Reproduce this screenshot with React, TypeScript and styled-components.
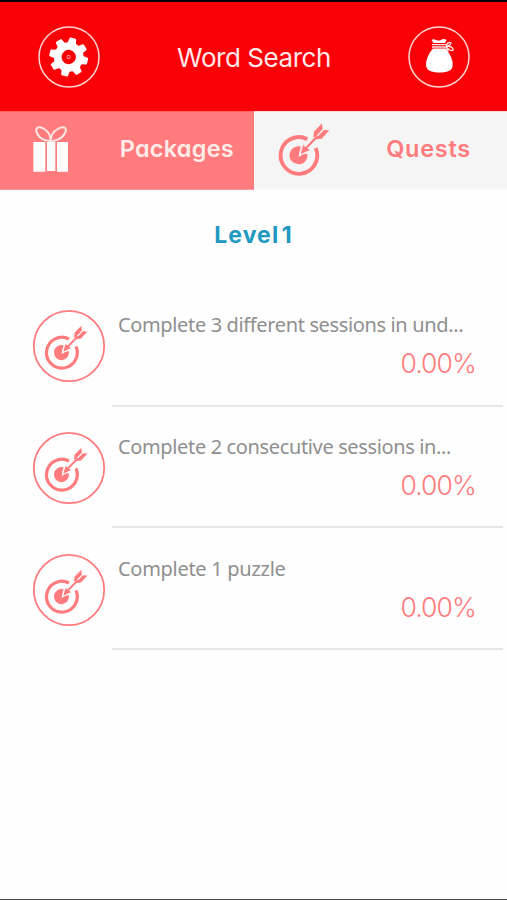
import React from "react";
import styled, { createGlobalStyle } from "styled-components";

const GlobalStyle = createGlobalStyle`
  * { box-sizing: border-box; }
  body { margin: 0; background: #fefefe; }
`;

const coral = "#ff7b7d";

const Screen = styled.main`
  display: flex;
  flex-direction: column;
  width: 507px;
  height: 900px;
  overflow: hidden;
  background: #fefefe;
  border-top: 2px solid #080000;
  border-bottom: 1px solid #454545;
  font-family: Inter, "Liberation Sans", sans-serif;
`;

const Header = styled.header`
  display: flex;
  align-items: center;
  justify-content: space-between;
  height: 109px;
  flex: none;
  padding: 1px 37px 0 38px;
  background: #fa0007;
`;

const RoundButton = styled.button`
  display: flex;
  width: 62px;
  height: 62px;
  padding: 0;
  border: 0;
  background: none;
`;

const Title = styled.h1`
  margin: 2px 0 0;
  font-size: 26px;
  line-height: 32px;
  font-weight: 400;
  letter-spacing: -0.45px;
  white-space: nowrap;
  color: #ffe9e9;
`;

const Tabs = styled.nav`
  display: flex;
  height: 79px;
  flex: none;
`;

const Tab = styled.button<{ $active?: boolean }>`
  display: flex;
  flex: ${(p) => (p.$active ? "1" : "0 0 254px")};
  align-items: flex-start;
  justify-content: space-between;
  border: 0;
  border-top: 1px solid ${(p) => (p.$active ? "#fbdcdc" : "#fb6567")};
  border-bottom: 1px solid ${(p) => (p.$active ? "#fafafa" : "#fd9294")};
  padding: ${(p) => (p.$active ? "10px 36px 0 23px" : "14px 20px 0 33px")};
  background: ${(p) => (p.$active ? "#f5f5f5" : coral)};
  color: ${(p) => (p.$active ? coral : "#ffebe8")};
  font-family: inherit;
`;

const TabLabel = styled.span<{ $top: number; $spacing: number }>`
  margin-top: ${(p) => p.$top}px;
  font-size: 23.5px;
  line-height: 30px;
  font-weight: 600;
  letter-spacing: ${(p) => p.$spacing}px;
  font-feature-settings: "cv11";
`;

const Level = styled.h2`
  flex: none;
  margin: 30px 0 39.4px;
  text-align: center;
  font-size: 23px;
  line-height: 30px;
  font-weight: 700;
  letter-spacing: 1.1px;
  word-spacing: -4px;
  color: #2098c0;
`;

const QuestList = styled.ul`
  margin: 0;
  padding: 0 4px 0 32px;
  list-style: none;
`;

const Quest = styled.li`
  display: flex;
  align-items: flex-start;
  height: 121.7px;
`;

const Badge = styled.div`
  flex: none;
  width: 80px;
  padding-top: 20px;
`;

const QuestBody = styled.div`
  display: flex;
  flex: 1;
  min-width: 0;
  height: 117.4px;
  flex-direction: column;
  padding: 22px 27px 0 6px;
  border-bottom: 2px solid #e6e6e6;
`;

const QuestName = styled.div<{ $spacing: number }>`
  font-family: "Noto Sans", "Open Sans", sans-serif;
  font-size: 20px;
  line-height: 28px;
  letter-spacing: ${(p) => p.$spacing}px;
  white-space: nowrap;
  color: #8f8f8f;
`;

const Progress = styled.div`
  margin: 8px 0 0;
  align-self: flex-end;
  font-size: 26.5px;
  line-height: 32px;
  font-weight: 350;
  letter-spacing: -0.9px;
  color: ${coral};
`;

const Icon = styled.svg`
  display: block;
  flex: none;
`;

function TargetShape() {
  return (
    <>
      <path
        d="M91 51.5A55 55 0 1 0 116 78"
        fill="none"
        stroke={coral}
        strokeWidth="11.5"
      />
      <path
        d="M72 74A27 27 0 1 0 91 95L80 96L65 105L67 91Z"
        fill={coral}
      />
      <path d="M76 90L122 42" stroke={coral} strokeWidth="7" />
      <path d="M71 96L79 68L87 77L99 84Z" fill={coral} />
      <path d="M109 47L111 29L135 4L137 21L118 42Z" fill={coral} />
      <path d="M115 52L134 50L157 25L141 24L121 44Z" fill={coral} />
    </>
  );
}

function TargetIcon() {
  return (
    <Icon width="53.3" height="55" viewBox="0 0 160 165">
      <TargetShape />
    </Icon>
  );
}

function TargetBadge() {
  return (
    <Icon width="74" height="74" viewBox="0 0 74 74">
      <circle cx="37" cy="37" r="35.2" fill="none" stroke={coral} strokeWidth="1.8" />
      <g transform="translate(11.5 15.6) scale(.28)">
        <TargetShape />
      </g>
    </Icon>
  );
}

function GearIcon() {
  return (
    <Icon width="62" height="62" viewBox="0 0 62 62">
      <circle cx="31" cy="31" r="30" fill="none" stroke="#ffd5d5" strokeWidth="1.5" />
      <g transform="translate(30.7 31) rotate(13)" fill="#fff">
        {[0, 45, 90, 135, 180, 225, 270, 315].map((angle) => (
          <path
            key={angle}
            transform={`rotate(${angle})`}
            d="M-4.6 -12L-3.4 -18.6Q-3.2 -19.4 -2.4 -19.4H2.4Q3.2 -19.4 3.4 -18.6L4.6 -12Z"
          />
        ))}
        <circle r="11" fill="none" stroke="#fff" strokeWidth="7.6" />
        <circle r="1.6" fill="none" stroke="#ff8b8b" strokeWidth="1" />
      </g>
    </Icon>
  );
}

function BagIcon() {
  return (
    <Icon width="62" height="62" viewBox="0 0 62 62">
      <circle cx="31" cy="31" r="30" fill="none" stroke="#ffd5d5" strokeWidth="1.5" />
      <g fill="#fff">
        <path d="M23.5 14Q26 12.6 28 14.1Q30.5 15.2 33 13.9Q35.5 12.3 38.6 14L37 17H25.5Z" />
        <path d="M25 22.5H37.5C40 25.3 44.7 32 44.7 38.5C44.7 44.5 40 46.5 31.5 46.5C23 46.5 18 44.5 18 38.5C18 32 22.5 25.3 25 22.5Z" />
      </g>
      <g fill="none" stroke="#ffe2e2" strokeWidth="1.3">
        <path d="M24 18.6H38M24 21H38M38 19.4Q40 15.5 42.8 16.8Q43.4 19.5 38 20M38 20Q45 20.2 45.2 24Q42.5 26.2 38 20.5M38 21L40.4 25.5" />
      </g>
    </Icon>
  );
}

function GiftIcon() {
  return (
    <Icon width="35.3" height="46" viewBox="0 0 106 138">
      <g fill="none" stroke="#ffe5e3" strokeWidth="6">
        <path d="M53 45C38 46 18 38 11 19C5 2 21 0 34 9C46 17 53 32 53 45Z" />
        <path d="M53 45C68 46 89 38 97 19C104 2 88 0 74 9C61 17 53 32 53 45Z" />
      </g>
      <path d="M1 48H37V137H1ZM42 48H67V135H42ZM72 48H105V137H72Z" fill="#fff" />
    </Icon>
  );
}

const quests = [
  { name: "Complete 3 different sessions in und...", progress: "0.00%", spacing: -0.36 },
  { name: "Complete 2 consecutive sessions in...", progress: "0.00%", spacing: -0.36 },
  { name: "Complete 1 puzzle", progress: "0.00%", spacing: -0.29 },
];

export default function App() {
  return (
    <Screen>
      <GlobalStyle />
      <Header>
        <RoundButton aria-label="Settings">
          <GearIcon />
        </RoundButton>
        <Title>Word Search</Title>
        <RoundButton aria-label="Rewards">
          <BagIcon />
        </RoundButton>
      </Header>
      <Tabs>
        <Tab>
          <GiftIcon />
          <TabLabel $top={8} $spacing={0.25}>Packages</TabLabel>
        </Tab>
        <Tab $active>
          <TargetIcon />
          <TabLabel $top={12} $spacing={0.75}>Quests</TabLabel>
        </Tab>
      </Tabs>
      <Level>Level 1</Level>
      <QuestList>
        {quests.map((quest) => (
          <Quest key={quest.name}>
            <Badge>
              <TargetBadge />
            </Badge>
            <QuestBody>
              <QuestName $spacing={quest.spacing}>{quest.name}</QuestName>
              <Progress>{quest.progress}</Progress>
            </QuestBody>
          </Quest>
        ))}
      </QuestList>
    </Screen>
  );
}
